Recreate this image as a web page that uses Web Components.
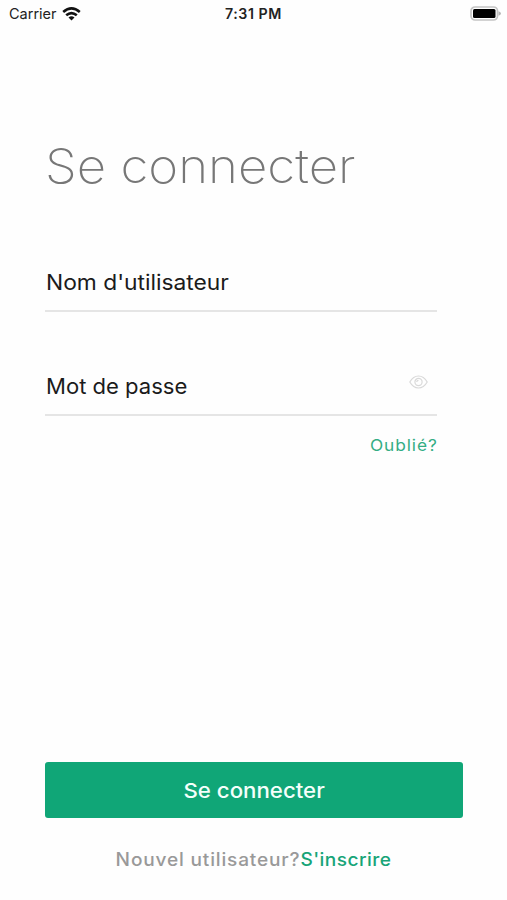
<!DOCTYPE html>
<html lang="fr">
<head>
<meta charset="utf-8">
<title>Se connecter</title>
<style>
html, body {
	margin:0;
	height:100%;
	background:#fefefe;
}
</style>
</head>
<body>
<login-screen></login-screen>

<script>
'use strict';

class StatusBar extends HTMLElement {
	constructor(){
		super();
		this.attachShadow({mode: 'open'});
		this.shadowRoot.innerHTML = `
<style>
:host {
	display:grid;
	grid-template-columns:1fr auto 1fr;
	align-items:center;
	height:27px;
	padding:0 6px 0 9px;
	box-sizing:border-box;
	font:14.5px/27px Inter, sans-serif;
	color:#222;
}
.carrier { display:flex; align-items:center; gap:5px; }
.time { font-weight:600; font-size:14.2px; letter-spacing:.55px; margin:0 3px 0 0; }
.battery { justify-self:end; display:block; }
svg { display:block; }
</style>
<div class="carrier">
	<span><slot name="carrier"></slot></span>
	<svg width="19" height="14" viewBox="0 0 19 14" fill="none" stroke="#111" stroke-width="2.6">
		<path d="M1.2 5Q9.5-2.2 17.8 5"/>
		<path d="M4.2 8.3Q9.5 3.9 14.8 8.3"/>
		<path d="M9.5 13.5L6.5 10.5Q9.5 8 12.5 10.5Z" fill="#111" stroke="none"/>
	</svg>
</div>
<span class="time"><slot name="time"></slot></span>
<svg class="battery" width="31" height="15" viewBox="0 0 31 15">
	<rect x="1" y="1" width="26.5" height="13" rx="4" fill="#fff" stroke="#c4c4c4" stroke-width="1.7"/>
	<rect x="3" y="3" width="22.5" height="9" rx="1.5" fill="#000"/>
	<path d="M28.5 5.2Q31 6 31 7.5T28.5 9.8Z" fill="#b4b4b4"/>
</svg>`;
	}
}

class TextField extends HTMLElement {
	constructor(){
		super();
		this.attachShadow({mode: 'open'});
		this.shadowRoot.innerHTML = `
<style>
:host {
	display:flex;
	justify-content:space-between;
	height:46px;
	box-sizing:border-box;
	border-bottom:2px solid #e5e5e5;
	font-size:21.3px;
	line-height:33px;
	color:#1b1b1b;
}
span {
	margin-left:1px;
	transform:scaleX(var(--stretch, 1));
	transform-origin:left;
}
</style>
<span><slot></slot></span>
<slot name="icon"></slot>`;
	}
}

class EyeIcon extends HTMLElement {
	constructor(){
		super();
		this.attachShadow({mode: 'open'});
		this.shadowRoot.innerHTML = `
<style>
:host { display:block; margin:5px 9px 0 0; }
svg { display:block; }
</style>
<svg width="19" height="14" viewBox="0 0 19 14" fill="none" stroke="#d9d9d9" stroke-width="1.2">
	<path d="M.8 7C3 3.2 5.9 1 9.5 1S16 3.2 18.2 7C16 10.8 13.1 13 9.5 13S3 10.8 .8 7Z"/>
	<circle cx="9.5" cy="7" r="3.6"/>
	<path d="M7.8 7A1.7 1.7 0 0 1 9.5 5.3"/>
</svg>`;
	}
}

class PrimaryButton extends HTMLElement {
	constructor(){
		super();
		this.attachShadow({mode: 'open'});
		this.shadowRoot.innerHTML = `
<style>
:host { display:block; }
button {
	display:block;
	width:100%;
	height:56px;
	padding:1px 0 0;
	border:0;
	border-radius:3px;
	background:#10a677;
	color:#f4fffb;
	font:500 20.5px/55px Inter, sans-serif;
}
span { display:inline-block; transform:scaleX(1.085); }
</style>
<button type="button"><span><slot></slot></span></button>`;
	}
}

class LoginScreen extends HTMLElement {
	constructor(){
		super();
		this.attachShadow({mode: 'open'});
		this.shadowRoot.innerHTML = `
<style>
:host {
	display:flex;
	flex-direction:column;
	height:900px;
	font-family:Inter, sans-serif;
}
main {
	flex:1;
	display:flex;
	flex-direction:column;
	padding:109px 44px 0 45px;
}
h1 {
	margin:0;
	align-self:flex-start;
	font-size:47px;
	line-height:60px;
	font-weight:200;
	color:#777;
	white-space:nowrap;
	transform:scaleX(1.085);
	transform-origin:left;
}
form {
	display:flex;
	flex-direction:column;
	width:392px;
	margin-top:70px;
}
text-field + text-field { margin-top:58px; }
.username { --stretch:1.07; }
.password { --stretch:1.035; }
.forgot {
	align-self:flex-end;
	margin:17px -1px 0 0;
	font-size:16px;
	line-height:24px;
	letter-spacing:.85px;
	color:#34ad84;
	transform:scaleX(1.08);
	transform-origin:right;
}
primary-button { margin-top:auto; }
footer {
	height:82px;
	box-sizing:border-box;
	padding-top:30px;
	display:flex;
	justify-content:center;
	font-size:18px;
	line-height:24px;
	font-weight:500;
	letter-spacing:.78px;
	color:#999;
	transform:scaleX(1.06);
}
.signup { letter-spacing:.42px; color:#17a478; }
</style>
<status-bar><span slot="carrier">Carrier</span><span slot="time">7:31 PM</span></status-bar>
<main>
	<h1>Se connecter</h1>
	<form>
		<text-field class="username">Nom d'utilisateur</text-field>
		<text-field class="password">Mot de passe<eye-icon slot="icon"></eye-icon></text-field>
		<span class="forgot">Oublié?</span>
	</form>
	<primary-button>Se connecter</primary-button>
</main>
<footer><span>Nouvel utilisateur?</span><span class="signup">S'inscrire</span></footer>`;
	}
}

window.customElements.define('status-bar',StatusBar);
window.customElements.define('text-field',TextField);
window.customElements.define('eye-icon',EyeIcon);
window.customElements.define('primary-button',PrimaryButton);
window.customElements.define('login-screen',LoginScreen);
</script>
</body>
</html>
